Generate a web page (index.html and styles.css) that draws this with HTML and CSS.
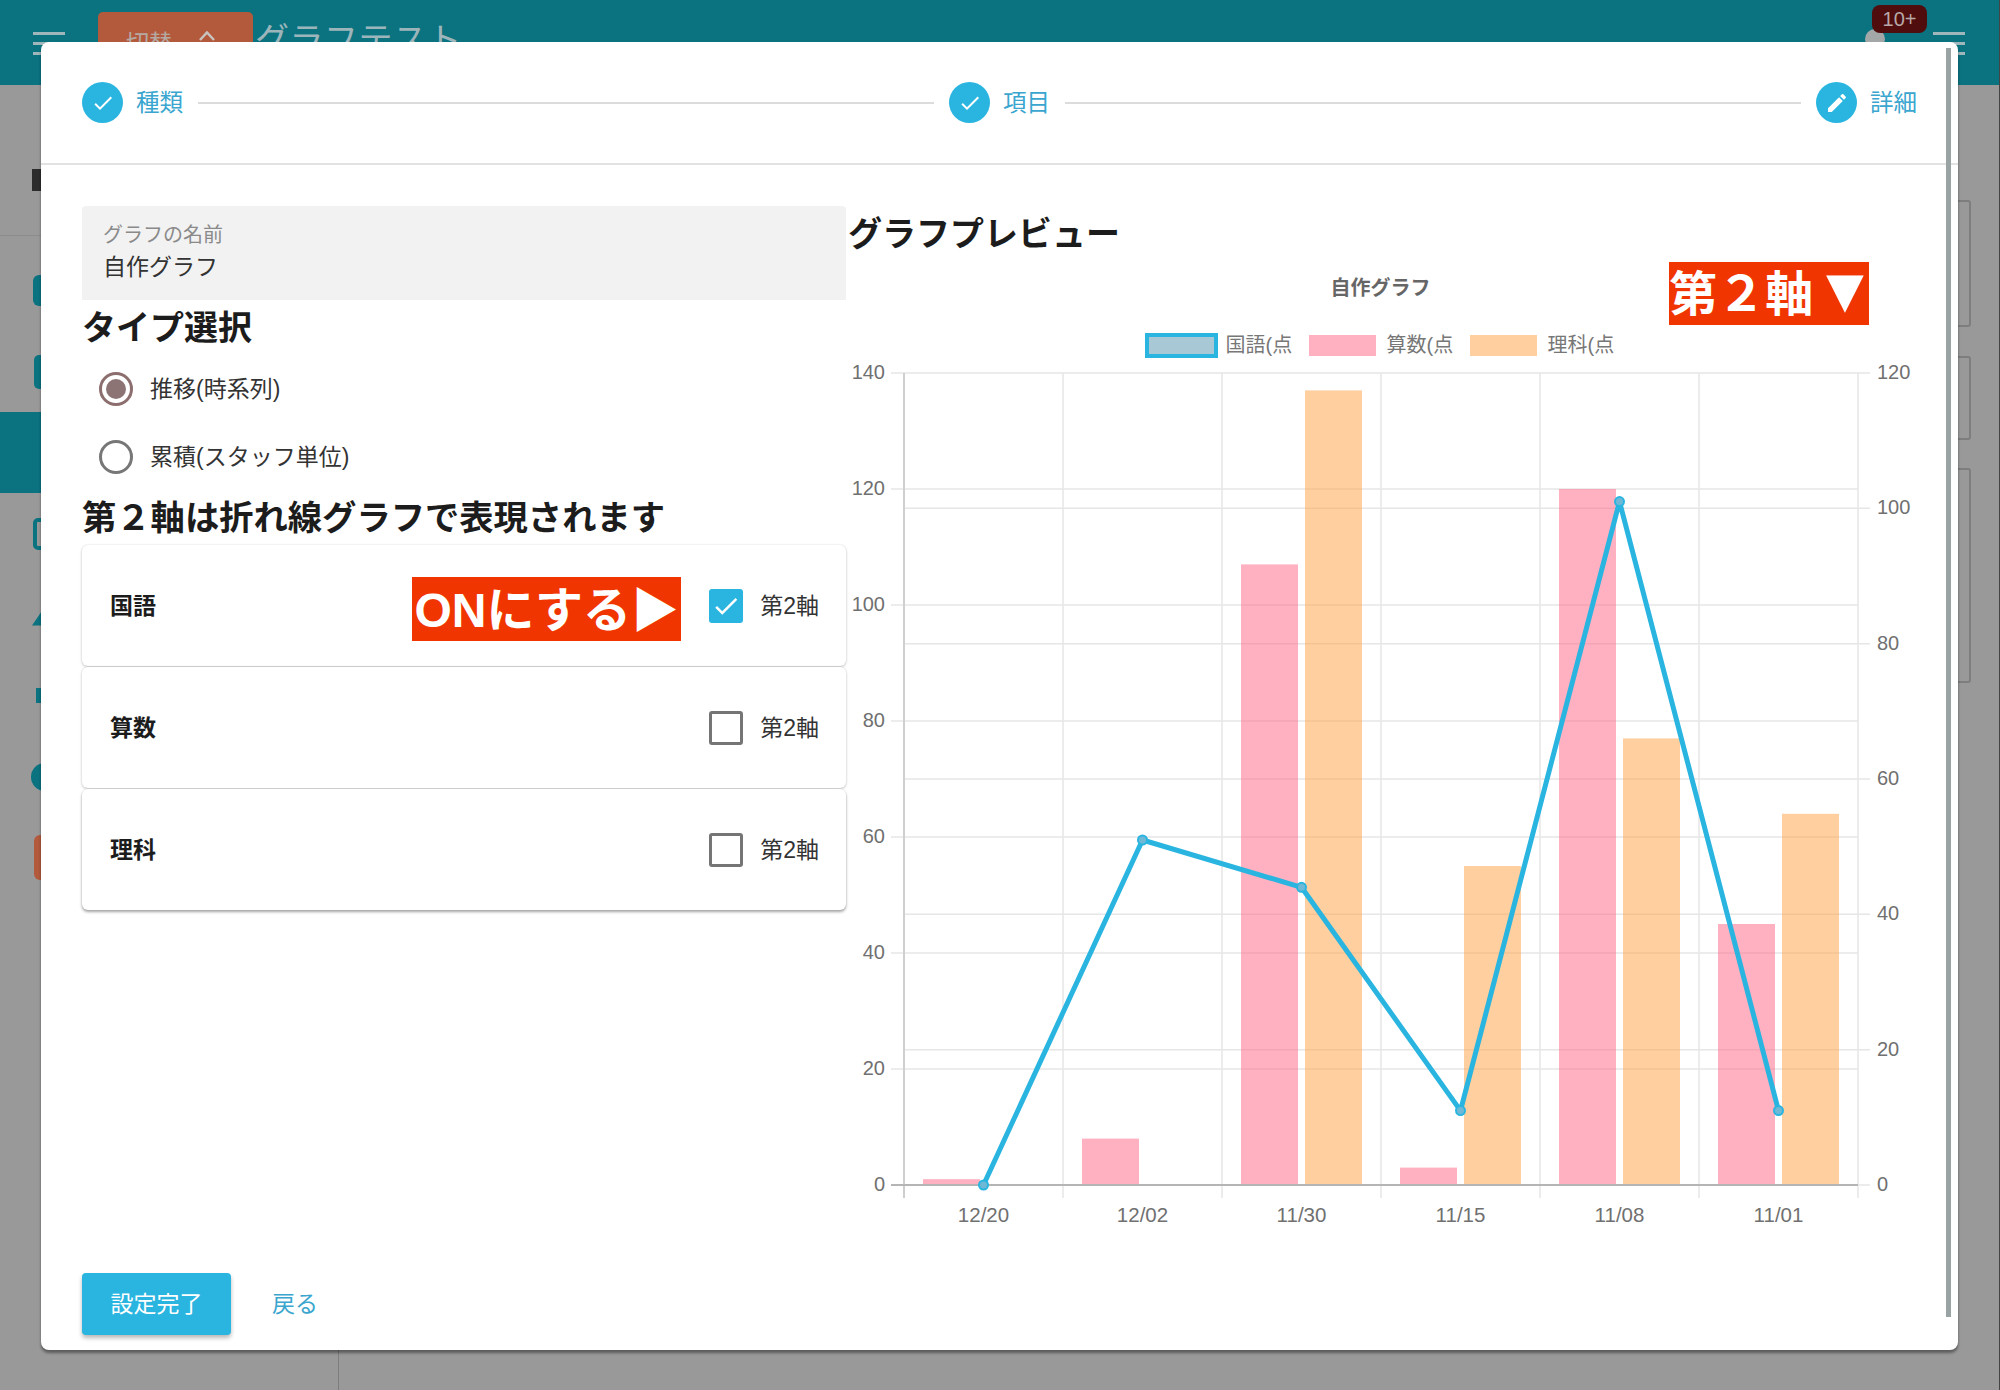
FILE: index.html
```html
<!DOCTYPE html>
<html lang="ja">
<head>
<meta charset="utf-8">
<title>グラフテスト</title>
<link rel="stylesheet" href="styles.css">
</head>
<body>
<div class="app">
  <header class="appbar">
    <div class="burger"><i></i><i></i><i></i></div>
    <div class="switch">切替<svg class="chev" viewBox="0 0 16 10"><path d="M1 9 8 1.5 15 9" /></svg></div>
    <div class="apptitle">グラフテスト</div>
    <div class="bell"><span class="avatar"></span><span class="badge">10+</span></div>
    <div class="burger"><i></i><i></i><i></i></div>
  </header>
  <div class="backdrop">
    <aside class="sidebar">
      <div class="sidetop"><span class="sideglyph"></span></div>
      <div class="siderow"><span class="ico ico-a"></span></div>
      <div class="siderow"><span class="ico ico-b"></span></div>
      <div class="siderow active"></div>
      <div class="siderow"><span class="ico ico-c"></span></div>
      <div class="siderow"><span class="ico ico-d"></span></div>
      <div class="siderow"><span class="ico ico-e"></span></div>
      <div class="siderow"><span class="ico ico-f"></span></div>
      <div class="siderow"><span class="ico ico-g"></span></div>
    </aside>
    <main class="bgcontent">
      <div class="bgcard bgcard-a"></div>
      <div class="bgcard bgcard-b"></div>
      <div class="bgcard bgcard-c"></div>
    </main>
  </div>

  <section class="dialog">
    <div class="scrollthumb"></div>
    <nav class="stepper">
      <div class="step">
        <span class="stepdot"><svg viewBox="0 0 24 24"><path d="M9 16.17 4.83 12l-1.41 1.41L9 19 21 7l-1.41-1.41z"/></svg></span>
        <span class="steplabel">種類</span>
      </div>
      <div class="stepline"></div>
      <div class="step">
        <span class="stepdot"><svg viewBox="0 0 24 24"><path d="M9 16.17 4.83 12l-1.41 1.41L9 19 21 7l-1.41-1.41z"/></svg></span>
        <span class="steplabel">項目</span>
      </div>
      <div class="stepline"></div>
      <div class="step">
        <span class="stepdot"><svg viewBox="0 0 24 24"><path d="M20.71 7.04c.39-.39.39-1.04 0-1.41l-2.34-2.34c-.37-.39-1.02-.39-1.41 0l-1.84 1.83 3.75 3.75M3 17.25V21h3.75L17.81 9.93l-3.75-3.75L3 17.25z"/></svg></span>
        <span class="steplabel">詳細</span>
      </div>
    </nav>

    <div class="dialogmain">
      <div class="formcol">
        <div class="textfield">
          <div class="fieldlabel">グラフの名前</div>
          <div class="fieldvalue">自作グラフ</div>
        </div>
        <h2 class="heading heading-type">タイプ選択</h2>
        <div class="radiogroup">
          <div class="radiorow"><span class="radio radio-on"></span><span class="radiotext">推移(時系列)</span></div>
          <div class="radiorow"><span class="radio"></span><span class="radiotext">累積(スタッフ単位)</span></div>
        </div>
        <h2 class="heading heading-axis">第２軸は折れ線グラフで表現されます</h2>
        <div class="panels">
          <div class="panel">
            <span class="panelname">国語</span>
            <span class="tag tag-on">ONにする▶</span>
            <span class="check check-on"><svg viewBox="0 0 24 24"><path d="M9 16.17 4.83 12l-1.41 1.41L9 19 21 7l-1.41-1.41z"/></svg></span>
            <span class="checktext">第2軸</span>
          </div>
          <div class="panel">
            <span class="panelname">算数</span>
            <span class="check"></span>
            <span class="checktext">第2軸</span>
          </div>
          <div class="panel panel-last">
            <span class="panelname">理科</span>
            <span class="check"></span>
            <span class="checktext">第2軸</span>
          </div>
        </div>
      </div>

      <div class="chartcol">
        <h2 class="heading heading-chart">グラフプレビュー</h2>
        <span class="tag tag-axis">第２軸<span class="tagtri">▼</span></span>
        <svg class="chart" viewBox="846 258 1072 980">
          <text class="t-title" x="1380.5" y="295">自作グラフ</text>
          <rect class="lg-line" x="1147" y="335" width="69" height="21"/>
          <text class="t-legend" x="1225.5" y="352">国語(点</text>
          <rect class="bar-a" x="1309" y="335" width="67" height="21"/>
          <text class="t-legend" x="1386.5" y="352">算数(点</text>
          <rect class="bar-b" x="1470" y="335" width="67" height="21"/>
          <text class="t-legend" x="1547.5" y="352">理科(点</text>

          <g class="grid">
            <path d="M891 373H1858M891 489H1858M891 605H1858M891 721H1858M891 837H1858M891 953H1858M891 1069H1858"/>
            <path d="M904 508.3H1870M904 643.7H1870M904 779H1870M904 914.3H1870M904 1049.7H1870M1858 373H1870M1858 1185H1870"/>
            <path d="M1063 373V1198M1222 373V1198M1381 373V1198M1540 373V1198M1699 373V1198M1858 373V1198"/>
          </g>
          <path class="axis-y" d="M904 373V1198"/>

          <rect class="bar-a" x="923" y="1179.2" width="57" height="5.8"/>
          <rect class="bar-a" x="1082" y="1138.6" width="57" height="46.4"/>
          <rect class="bar-a" x="1241" y="564.4" width="57" height="620.6"/>
          <rect class="bar-a" x="1400" y="1167.6" width="57" height="17.4"/>
          <rect class="bar-a" x="1559" y="489" width="57" height="696"/>
          <rect class="bar-a" x="1718" y="924" width="57" height="261"/>
          <rect class="bar-b" x="1305" y="390.4" width="57" height="794.6"/>
          <rect class="bar-b" x="1464" y="866" width="57" height="319"/>
          <rect class="bar-b" x="1623" y="738.4" width="57" height="446.6"/>
          <rect class="bar-b" x="1782" y="813.8" width="57" height="371.2"/>

          <path class="axis-x" d="M891 1185H1858"/>
          <polyline class="line" points="983.5,1185 1142.5,840 1301.5,887.3 1460.5,1110.6 1619.5,501.6 1778.5,1110.6"/>
          <circle class="pt" cx="983.5" cy="1185" r="4.5"/>
          <circle class="pt" cx="1142.5" cy="840" r="4.5"/>
          <circle class="pt" cx="1301.5" cy="887.3" r="4.5"/>
          <circle class="pt" cx="1460.5" cy="1110.6" r="4.5"/>
          <circle class="pt" cx="1619.5" cy="501.6" r="4.5"/>
          <circle class="pt" cx="1778.5" cy="1110.6" r="4.5"/>

          <g class="t-left">
            <text x="885" y="379">140</text>
            <text x="885" y="495">120</text>
            <text x="885" y="611">100</text>
            <text x="885" y="727">80</text>
            <text x="885" y="843">60</text>
            <text x="885" y="959">40</text>
            <text x="885" y="1075">20</text>
            <text x="885" y="1191">0</text>
          </g>
          <g class="t-right">
            <text x="1877" y="379">120</text>
            <text x="1877" y="514.3">100</text>
            <text x="1877" y="649.7">80</text>
            <text x="1877" y="785">60</text>
            <text x="1877" y="920.3">40</text>
            <text x="1877" y="1055.7">20</text>
            <text x="1877" y="1191">0</text>
          </g>
          <g class="t-bottom">
            <text x="983.5" y="1222">12/20</text>
            <text x="1142.5" y="1222">12/02</text>
            <text x="1301.5" y="1222">11/30</text>
            <text x="1460.5" y="1222">11/15</text>
            <text x="1619.5" y="1222">11/08</text>
            <text x="1778.5" y="1222">11/01</text>
          </g>
        </svg>
      </div>
    </div>

    <footer class="actions">
      <button class="btn-primary" type="button">設定完了</button>
      <button class="btn-text" type="button">戻る</button>
    </footer>
  </section>
</div>
</body>
</html>
```
FILE: styles.css
```css
* { box-sizing: border-box; }
html, body { margin: 0; padding: 0; }
body {
  font-family: "Liberation Sans", "Noto Sans CJK JP", sans-serif;
  color: #333;
  background: #999;
}
.app {
  position: relative;
  width: 2000px;
  height: 1390px;
  overflow: hidden;
  background: #999;
  border-right: 1px solid #444;
  display: flex;
  flex-direction: column;
}

/* dimmed page behind the dialog */
.appbar {
  height: 85px;
  flex: none;
  background: #0b7380;
  display: flex;
  align-items: flex-start;
  padding: 0 34px 0 33px;
  color: #9cb5bb;
}
.burger {
  width: 32px;
  margin-top: 32px;
  display: flex;
  flex-direction: column;
  gap: 7px;
}
.burger i { display: block; height: 3px; background: #9fb6ba; }
.switch {
  margin: 12px 0 0 33px;
  width: 155px;
  height: 60px;
  border-radius: 5px;
  background: #b35a3d;
  color: #b5a9a3;
  font-size: 23px;
  line-height: 62px;
  padding-left: 28px;
  display: flex;
  gap: 27px;
}
.chev { width: 16px; height: 10px; margin-top: 19px; fill: none; stroke: #c9c3bf; stroke-width: 2.5; }
.apptitle { margin: 16px 0 0 2px; font-size: 34px; line-height: 48px; letter-spacing: .5px; }
.bell { position: relative; margin-left: auto; width: 62px; height: 60px; }
.avatar {
  position: absolute; left: 0; top: 29px;
  width: 20px; height: 20px; border-radius: 50%;
  background: #a3a7a8;
}
.badge {
  position: absolute; left: 7px; top: 5px;
  width: 55px; height: 28px; border-radius: 8px;
  background: #4f0d0d;
  color: #b8a8a8;
  font-size: 20px; line-height: 28px; text-align: center;
}
.bell + .burger { margin-left: 6px; }

.backdrop { flex: 1; display: flex; }
.sidebar { width: 339px; border-right: 1px solid #7d7d7d; }
.sidetop { height: 151px; border-bottom: 1px solid #8c8c8c; margin-bottom: 14px; padding: 84px 0 0 32px; }
.sideglyph { display: block; width: 14px; height: 22px; background: #2c2c2c; }
.siderow { height: 81px; display: flex; align-items: center; }
.siderow.active { background: #0b7380; }
.ico { display: block; background: #0b7380; }
.ico-a { width: 30px; height: 31px; margin-left: 33px; border-radius: 6px; }
.ico-b { width: 30px; height: 34px; margin-left: 34px; border-radius: 5px; }
.ico-c { width: 30px; height: 32px; margin-left: 33px; border: 4px solid #0b7380; background: transparent; border-radius: 5px; }
.ico-d { width: 30px; height: 22px; margin-left: 32px; clip-path: polygon(0 100%, 50% 0, 100% 100%); }
.ico-e { width: 20px; height: 15px; margin-left: 36px; }
.ico-f { width: 28px; height: 28px; margin-left: 31px; border-radius: 50%; }
.ico-g { width: 30px; height: 45px; margin-left: 34px; border-radius: 6px; background: #b35a3d; }

.bgcontent { flex: 1; display: flex; flex-direction: column; align-items: flex-end; padding: 115px 28px 0 0; }
.bgcard { width: 200px; border: 2px solid #7e7e7e; border-radius: 3px; }
.bgcard-a { height: 127px; }
.bgcard-b { height: 84px; margin-top: 29px; }
.bgcard-c { height: 215px; margin-top: 28px; }

/* dialog */
.dialog {
  position: absolute;
  left: 41px;
  top: 42px;
  width: 1917px;
  height: 1308px;
  background: #fff;
  border-radius: 8px;
  box-shadow: 0 3px 3px rgba(0, 0, 0, .4);
  display: flex;
  flex-direction: column;
}
.scrollthumb {
  position: absolute;
  left: 1905px;
  top: 6px;
  width: 5px;
  height: 1269px;
  background: #9aa3a3;
}
.stepper {
  height: 123px;
  flex: none;
  padding: 0 41px;
  border-bottom: 2px solid #e2e2e2;
  display: flex;
  align-items: center;
}
.step { display: flex; align-items: center; gap: 13px; }
.stepdot {
  width: 41px; height: 41px;
  border-radius: 50%;
  background: #29b5e0;
  display: flex; align-items: center; justify-content: center;
}
.stepdot svg { width: 24px; height: 24px; fill: #fff; }
.steplabel { font-size: 23.5px; color: #3aa6cf; line-height: 30px; }
.stepline { flex: 1; height: 2px; margin: 0 15px; background: #dcdcdc; }

.dialogmain { flex: 1; display: flex; padding: 41px 41px 0; min-height: 0; }
.formcol { width: 764px; flex: none; }
.chartcol { position: relative; flex: 1; padding-left: 2px; }

.textfield {
  height: 94px;
  background: #f2f2f2;
  border-radius: 4px 4px 0 0;
  padding: 16px 21px 0;
}
.fieldlabel { font-size: 20px; line-height: 26px; color: #8a8a8a; }
.fieldvalue { font-size: 23px; line-height: 34px; margin-top: 2px; color: #333; }

.heading { margin: 0; font-size: 34px; font-weight: 700; color: #1c1c1c; }
.heading-type { line-height: 56px; height: 55px; }
.radiogroup { padding-left: 17px; }
.radiorow { height: 68px; display: flex; align-items: center; gap: 17px; }
.radio {
  width: 34px; height: 34px; border-radius: 50%;
  border: 3px solid #777;
  display: flex; align-items: center; justify-content: center;
}
.radio-on { border-color: #8d6e6e; }
.radio-on::after { content: ""; width: 20px; height: 20px; border-radius: 50%; background: #8d7474; }
.radiotext { font-size: 23px; color: #333; padding-bottom: 4px; }
.heading-axis { font-size: 34.3px; line-height: 54px; height: 54px; }
.heading-chart { line-height: 56px; height: 52px; }

.panels { display: flex; flex-direction: column; gap: 1px; }
.panel {
  height: 121px;
  background: #fff;
  border-radius: 6px;
  box-shadow: 0 1px 3px rgba(0, 0, 0, .22), 0 0 2px rgba(0, 0, 0, .08);
  padding: 0 27px 0 28px;
  display: flex;
  align-items: center;
}
.panel-last { box-shadow: 0 2px 3px rgba(0, 0, 0, .35), 0 0 2px rgba(0, 0, 0, .1); }
.panelname { font-size: 23px; font-weight: 700; color: #1c1c1c; margin-right: auto; padding-bottom: 3px; }
.tag {
  background: #f03500;
  color: #fff;
  font-weight: 700;
  white-space: nowrap;
  display: flex; align-items: center; justify-content: center;
}
.tag-on { width: 269px; height: 64px; font-size: 48px; margin: 7px 28px 0 0; padding-bottom: 6px; }
.tag-axis { position: absolute; left: 823px; top: 56px; width: 200px; height: 63px; font-size: 48px; padding-bottom: 7px; }
.tagtri { font-size: 64px; line-height: 0; margin-right: -8px; }
.check {
  width: 34px; height: 34px; border-radius: 3px;
  border: 3px solid #757575;
  display: flex; align-items: center; justify-content: center;
}
.check-on { background: #29b5e0; border-color: #29b5e0; }
.check-on svg { width: 30px; height: 30px; fill: #fff; flex: none; }
.checktext { font-size: 23px; color: #333; margin-left: 17px; padding-bottom: 3px; }

/* chart */
.chart { display: block; width: 1072px; height: 980px; margin-left: -2px; }
.t-title { font-size: 20px; font-weight: 700; fill: #666; text-anchor: middle; }
.t-legend { font-size: 20px; fill: #777; }
.t-left text, .t-right text, .t-bottom text { font-size: 20px; fill: #707070; }
.t-bottom text { font-size: 20.5px; }
.t-left text { text-anchor: end; }
.t-bottom text { text-anchor: middle; }
.grid path { fill: none; stroke: #e6e6e6; stroke-width: 1.5; }
.axis-y { fill: none; stroke: #cfcfcf; stroke-width: 2; }
.axis-x { fill: none; stroke: #b5b5b5; stroke-width: 2; }
.bar-a { fill: rgba(255, 99, 132, .5); }
.bar-b { fill: rgba(255, 159, 64, .5); }
.lg-line { fill: #a9c8d6; stroke: #29b5e0; stroke-width: 4; }
.line { fill: none; stroke: #29b5e0; stroke-width: 5; stroke-linejoin: round; }
.pt { fill: #6fb9d6; stroke: #29b5e0; stroke-width: 2; }

.actions { flex: none; padding: 0 41px 15px; display: flex; align-items: center; }
.btn-primary {
  width: 149px; height: 62px;
  border: 0; border-radius: 4px;
  background: #29b5e0; color: #fff;
  font: inherit; font-size: 23px;
  padding: 0 0 4px;
  box-shadow: 0 3px 4px rgba(0, 0, 0, .28);
}
.btn-text {
  margin-left: 41px; padding: 0 0 4px;
  border: 0; background: none;
  font: inherit; font-size: 23px; color: #3aa6cf;
}
```
